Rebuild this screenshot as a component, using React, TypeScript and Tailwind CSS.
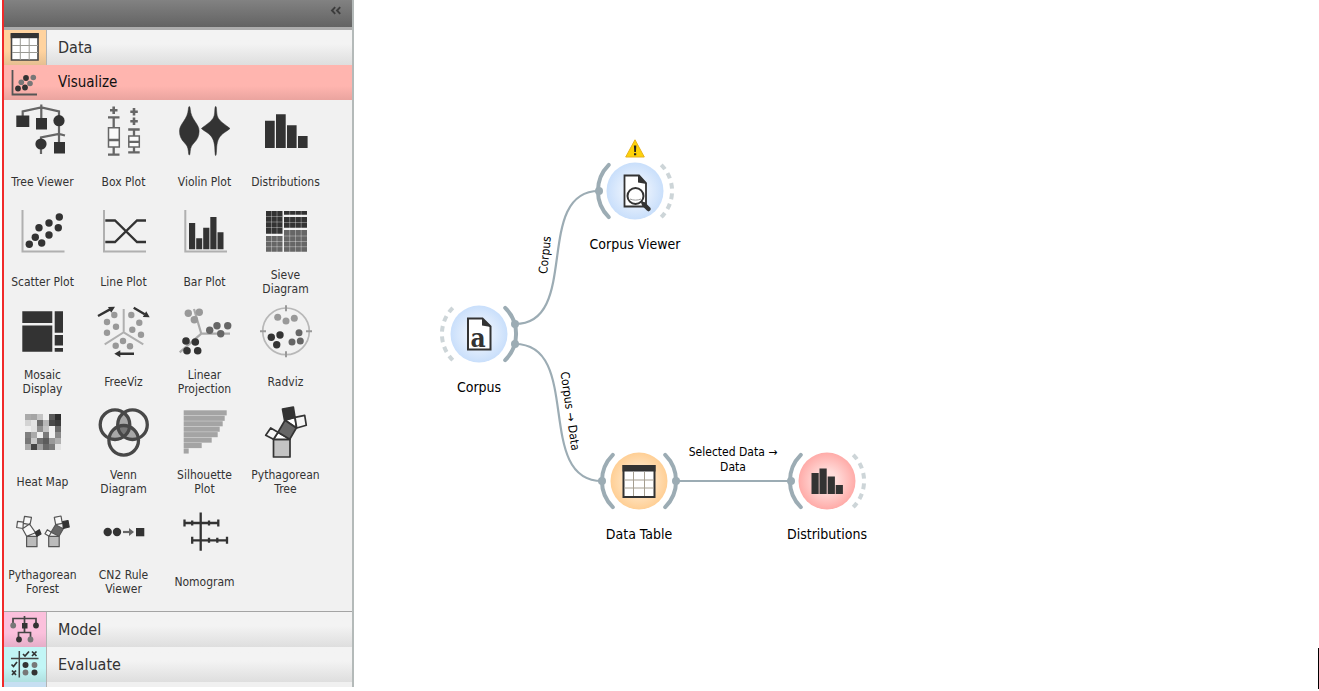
import type { ReactNode } from 'react'

const DARK = '#333'
const MID = '#666'
const LIGHT = '#999'

type Dot = [number, number]

function Dots({ at, r = 3.5, fill = DARK }: { at: Dot[]; r?: number; fill?: string }) {
  return (
    <g fill={fill}>
      {at.map(([x, y]) => (
        <circle key={`${x}-${y}`} cx={x} cy={y} r={r} />
      ))}
    </g>
  )
}

const heat = [
  ['#aaa', '#a4a4a4', '#c4c4c4', '#f0f0f0', '#5a5a5a', '#2e2e2e'],
  ['#d4d4d4', '#e4e4e4', '#6e6e6e', '#b8b8b8', '#4a4a4a', '#3c3c3c'],
  ['#eee', '#e2e2e2', '#909090', '#c4c4c4', '#f0f0f0', '#6a6a6a'],
  ['#808080', '#aaa', '#eee', '#7a7a7a', '#f0f0f0', '#8a8a8a'],
  ['#777', '#c8c8c8', '#707070', '#5c5c5c', '#999', '#b0b0b0'],
  ['#aaa', '#444', '#a0a0a0', '#6a6a6a', '#7c7c7c', '#e4e4e4'],
]

const silhouette = [43, 41, 39, 36, 34, 28, 18, 5]

const icons: Record<string, ReactNode> = {
  tree: (
    <>
      <path d="M29.3 3.5V20M10.7 16v-5.5L29.3 6.5 47 10.5V42M29 53V36.500L47 33l6 1.500" fill="none" stroke={MID} strokeWidth="2.200" />
      <path d="M4.300 14.500h13v11.500h-13zM24 17h11v11.500H24zM42 41h11v11.500H42z" fill={DARK} />
      <Dots at={[[47, 19.700], [29, 43]]} r={5.600} />
    </>
  ),
  box: (
    <g fill="none" stroke={MID} strokeWidth="2.300">
      <path d="M20.700 5.500v7.500M17 9.300h7.500M41 7v7.500M37.300 10.700h7.500M41 16.500V24M37.300 20.200h7.500" strokeWidth="2.600" />
      <path d="M15 16.300h11.500M20.700 16.300v10M20.700 46v8M15 53.700h11.500M35.200 28.500h11.500M41 28.500V35M41 46v5.500M35.200 51.300h11.500" />
      <path d="M15.500 26.800h10.800V46H15.500zM35.800 35h10.500v11H35.800z" fill="#fafafa" strokeWidth="1.500" />
      <path d="M15.500 39h10.800M35.800 40.800h10.500" />
    </g>
  ),
  violin: (
    <path d="M15.300 5.500c.6 0 .8 1 1 3 .4 4.500 2 8 4.800 12 2.300 3.500 4 6 4 9.500 0 5-1.500 8-4.700 11.500-2.500 2.700-3.800 4.500-4.200 9-.2 2.500-.3 3.500-.9 3.500s-.7-1-.9-3.500c-.4-4.500-1.700-6.300-4.200-9C7 38 5.500 35 5.500 30c0-3.500 1.700-6 4-9.500 2.800-4 4.400-7.500 4.800-12 .2-2 .4-3 1-3zM41.700 5.500c.6 0 .8 1 1 5.500.3 5.500 2 7.500 5.500 10.500 3 2.500 5.500 4 7.800 6-2 2-5 3.300-7.500 5.500-3.500 3-5.200 6.500-5.800 13-.3 6-.4 8.500-1 8.500s-.7-2.500-1-8.500c-.6-6.500-2.300-10-5.800-13-2.500-2.200-5.500-3.500-7.500-5.500 2.300-2 4.800-3.500 7.800-6 3.500-3 5.200-5 5.500-10.500.2-4.500.4-5.500 1-5.500z" fill={DARK} stroke={DARK} strokeWidth=".5" />
  ),
  distributions: (
    <path d="M10 19.700h9.700V47H10zM21 13.300h9.700V47H21zM32 24.300h9.600V47H32zM43 35h9.600v12H43z" fill={DARK} />
  ),
  scatter: (
    <>
      <path d="M10.500 9v41.500h42" fill="none" stroke="#b0b0b0" strokeWidth="2" />
      <Dots at={[[17.300, 43.300], [29.700, 42], [23.300, 36.300], [37, 34], [27, 26.700], [46.300, 26.700], [37, 22], [47.300, 16]]} r={3.700} />
    </>
  ),
  line: (
    <>
      <path d="M11 9v41.500h42" fill="none" stroke="#b0b0b0" strokeWidth="2" />
      <path d="M12.300 19.500H22L44 41h9M12.300 41H22L44 19.500h9" fill="none" stroke={DARK} strokeWidth="2.300" />
    </>
  ),
  bar: (
    <>
      <path d="M11.300 9v41.500H53" fill="none" stroke="#b0b0b0" strokeWidth="2" />
      <path d="M15 22h6.200v26.300H15zM22.200 37.300h6v11h-6zM29.200 26.700h6.200v21.600h-6.200zM36.300 16h6.200v32.300h-6.200zM43.500 31.300h6v17h-6z" fill={DARK} />
    </>
  ),
  sieve: (
    <>
      <path d="M11 10h16.500v22.700H11zM29 10h23v3.700H29zM29 16h23v10.700H29z" fill={DARK} />
      <path d="M11 35h16.500v15.700H11zM29 29h23v21.700H29z" fill={MID} />
      <path d="M16.500 10v41M22 10v41M34.700 10v41M40.500 10v41M46.200 10v41M11 15.500h16.500M11 21h16.500M11 26.500h16.500M29 21.500h23M11 40.500h41M11 45.700h41M29 35h23" stroke="#fff" strokeOpacity=".32" strokeWidth="1" />
    </>
  ),
  mosaic: (
    <path d="M10.300 10.300h30V22h-30zM10.300 24.500h30v26.200h-30zM42.700 10.300H51v21.400h-8.300zM42.700 34H51v10.500h-8.300zM42.700 47H51v3.700h-8.300z" fill={DARK} />
  ),
  freeviz: (
    <>
      <path d="M30.700 8v23.300l-19 12M30.700 31.300l19.600 12" fill="none" stroke="#b0b0b0" strokeWidth="2" />
      <Dots fill={LIGHT} r={3.200} at={[[21.300, 14], [14, 21], [23, 25.700], [14, 31.700], [38.300, 14], [46.300, 21.700], [39.300, 28.700], [48, 33.700], [30, 40], [22.700, 44.700], [37, 45.300]]} />
      <path d="M5 15l12-6.600M40.700 6.700l11 6.600M41 52.700H27" stroke={DARK} strokeWidth="2.400" />
      <path d="M22 5.700l-7 .3 3.200 5.800zM56.700 16.300l-3.500-6-3.400 5.700zM21.300 52.700l6-3.500v7z" fill={DARK} />
    </>
  ),
  linear: (
    <>
      <path d="M20 8l7.300 24.700H56M27.300 32.700L5.700 51.300" fill="none" stroke="#aaa" strokeWidth="2.200" />
      <Dots fill={LIGHT} r={3.700} at={[[14.300, 12.300], [25.300, 11.300], [20.300, 18.700]]} />
      <Dots fill={MID} r={3.700} at={[[35.700, 29.300], [43, 24.700], [53.700, 24.700], [46.700, 32.700]]} />
      <Dots at={[[12, 40], [21.300, 41], [13, 49.700], [23.700, 49.700]]} r={3.800} />
    </>
  ),
  radviz: (
    <>
      <circle cx="31" cy="30.300" r="23.300" fill="none" stroke="#b8b8b8" strokeWidth="1.700" />
      <path d="M31 4.300v6M31 50.300v6M5 30.300h6M51 30.300h6" stroke="#999" strokeWidth="2" />
      <Dots fill={LIGHT} at={[[22.700, 16.300], [31, 20], [39.300, 17.300]]} />
      <Dots fill={MID} at={[[44, 31.700], [45.300, 40], [37, 41]]} />
      <Dots at={[[16.300, 36.300], [25, 34], [21.700, 43.700]]} r={3.700} />
    </>
  ),
  heat: (
    <g shapeRendering="crispEdges">
      {heat.map((row, y) =>
        row.map((fill, x) => <rect key={`${x}-${y}`} x={13 + x * 6} y={13 + y * 6} width="6" height="6" fill={fill} />),
      )}
    </g>
  ),
  venn: (
    <>
      <path d="M30.700 11.500c4 3.500 6.300 7.500 6 12.500-4-1.500-8-1.500-12 0-.3-5 2-9 6-12.500zM17 38c0-6 3-10.500 7.700-13.500.7 5 2.800 8.500 6 11.300-4 3-9 4-13.700 2.200zM44.500 38c0-6-3-10.500-7.700-13.500-.7 5-2.800 8.500-6 11.300 4 3 9 4 13.700 2.200z" fill="#a8a8a8" />
      <path d="M24.700 24.500c4-1.500 8-1.500 12 0-.7 5-2.800 8.500-6 11.300-3.200-2.800-5.300-6.300-6-11.300z" fill="#777" />
      <g fill="none" stroke="#484848" strokeWidth="3.300">
        <circle cx="22" cy="23.700" r="14.800" />
        <circle cx="39.500" cy="23.700" r="14.800" />
        <circle cx="30.700" cy="39.300" r="14.800" />
      </g>
    </>
  ),
  silhouette: (
    <g fill="#a4a4a4">
      {silhouette.map((w, i) => (
        <rect key={w} x="9.700" y={9.300 + i * 5.450} width={w} height="5.100" />
      ))}
    </g>
  ),
  pythTree: (
    <g stroke={DARK} strokeWidth="1.700" strokeLinejoin="round">
      <path d="M18.500 38.500H35v17.500H18.500z" fill="#c4c4c4" />
      <path d="M18.500 38.300l4.500-7 12 7zM30 19.300l10-3 1.500 10.700z" fill="#fff" />
      <path d="M30 19.300L41.300 27l-6.600 11.300L23 31.300z" fill={MID} />
      <path d="M27.500 8l10.800-2L40 16.500 29.500 19z" fill={DARK} />
      <path d="M40 16.300l9.700-2 1.600 10L41.700 27zM15.700 27l7.300 4.300-4.500 7-7.800-4z" fill="#f6f6f6" />
    </g>
  ),
  forest: (
    <g stroke="#555" strokeWidth="1.200" strokeLinejoin="round">
      <path d="M14.600 35.300H25v10.400H14.600zM36.700 35.300h10.500v10.400H36.700z" fill="#bbb" />
      <path d="M10.500 27.700L17.500 23l6 8.700-8.900 3.600zM12.500 15.300l7 1-1.500 7.400-6.700-1.400zM5.500 20.300l5.800.9-.3 6.300-6.300-1zM42.300 16.300l6.700-1.300 1.300 7.300-6.600 1.400zM35.300 28.700l4 2.600-2.300 3.900-4-2.500zM14.600 35.300l9-3.600 1.400 3.600z" fill="#f8f8f8" />
      <path d="M43.500 23.700l7.800 4L47 35.300l-8-4z" fill={MID} />
      <path d="M50.700 20.700l5.300-1.200L57.200 26l-5.900 1.500zM23.300 31.200l4-2.500 1.700 4.300-4 2.200z" fill={DARK} stroke={DARK} />
    </g>
  ),
  cn2: (
    <>
      <Dots at={[[14.700, 31], [24, 31]]} r={4.200} />
      <path d="M30 31h7" stroke={MID} strokeWidth="2.200" />
      <path d="M36 27l5 4-5 4z" fill={MID} />
      <path d="M43 27h8.300v8.300H43z" fill={DARK} />
    </>
  ),
  nomogram: (
    <path d="M26.700 11.500v38.300M10.500 22h34M10.500 18.500v7M18.200 19.500v5M35 19.500v5M44.300 18.500v7M18.200 39.300H53M18.200 35.800v7M35 36.800v5M43.300 36.800v5M53 35.800v7" fill="none" stroke={DARK} strokeWidth="2.300" />
  ),
}

const widgets: { icon: string; label: string }[] = [
  { icon: 'tree', label: 'Tree Viewer' },
  { icon: 'box', label: 'Box Plot' },
  { icon: 'violin', label: 'Violin Plot' },
  { icon: 'distributions', label: 'Distributions' },
  { icon: 'scatter', label: 'Scatter Plot' },
  { icon: 'line', label: 'Line Plot' },
  { icon: 'bar', label: 'Bar Plot' },
  { icon: 'sieve', label: 'Sieve Diagram' },
  { icon: 'mosaic', label: 'Mosaic Display' },
  { icon: 'freeviz', label: 'FreeViz' },
  { icon: 'linear', label: 'Linear Projection' },
  { icon: 'radviz', label: 'Radviz' },
  { icon: 'heat', label: 'Heat Map' },
  { icon: 'venn', label: 'Venn Diagram' },
  { icon: 'silhouette', label: 'Silhouette Plot' },
  { icon: 'pythTree', label: 'Pythagorean Tree' },
  { icon: 'forest', label: 'Pythagorean Forest' },
  { icon: 'cn2', label: 'CN2 Rule Viewer' },
  { icon: 'nomogram', label: 'Nomogram' },
]

function TableGlyph() {
  return (
    <>
      <path d="M1.500 1h26.500v26H1.500z" fill="#fff" stroke="#444" strokeWidth="1.600" />
      <path d="M.7 0h28v5.200H.7z" fill={DARK} />
      <path d="M10.300 5v22M19.200 5v22M2 12.500h26M2 19.500h26" stroke="#9a9a94" strokeWidth="1" />
    </>
  )
}

function Category({ label, iconClass, active, children }: { label: string; iconClass: string; active?: boolean; children: ReactNode }) {
  return (
    <button
      className={`flex h-[35px] w-full text-left ${
        active
          ? 'bg-linear-to-b from-[#ffb5af] from-60% to-[#eaa49f] text-[15px] text-[#111]'
          : 'bg-linear-to-b from-[#f3f3f3] from-40% to-[#dedede] text-base text-[#333]'
      }`}
    >
      <span className={`flex h-full w-[43px] items-center pl-1.5 ${iconClass}`}>
        <svg width="29" height="29" viewBox="0 0 29 29" aria-hidden="true">
          {children}
        </svg>
      </span>
      <span className="self-center pl-[11px]">{label}</span>
    </button>
  )
}

const arcs = {
  left: 'M13.800 13.800A37 37 0 0 0 13.800 66.200',
  right: 'M66.200 13.800A37 37 0 0 1 66.200 66.200',
}

function Node({ label, place, tint, left, right, badge, children }: {
  label: string
  place: string
  tint: [string, string]
  left?: 'solid' | 'dashed'
  right?: 'solid' | 'dashed'
  badge?: ReactNode
  children: ReactNode
}) {
  const id = label.replace(' ', '-')
  const arc = (d: string, kind: 'solid' | 'dashed') => (
    <path
      d={d}
      fill="none"
      strokeWidth="4"
      stroke={kind === 'solid' ? '#9cacb4' : '#cdd5d8'}
      strokeLinecap={kind === 'solid' ? 'round' : 'butt'}
      strokeDasharray={kind === 'solid' ? undefined : '5.800 4.700'}
    />
  )
  return (
    <div className={`absolute flex w-[120px] flex-col items-center ${place}`}>
      {badge}
      <svg width="80" height="80" viewBox="0 0 80 80" aria-hidden="true">
        <defs>
          <radialGradient id={id}>
            <stop offset="0" stopColor={tint[0]} />
            <stop offset=".35" stopColor={tint[0]} />
            <stop offset="1" stopColor={tint[1]} />
          </radialGradient>
        </defs>
        <circle cx="40" cy="40" r="28.500" fill={`url(#${id})`} />
        {left && arc(arcs.left, left)}
        {right && arc(arcs.right, right)}
        {children}
      </svg>
      <span className="mt-[3px] text-sm leading-5 whitespace-nowrap text-black">{label}</span>
    </div>
  )
}

export default function App() {
  return (
    <div className="flex min-h-screen bg-white font-['DejaVu_Sans_Condensed','Noto_Sans',sans-serif]">
      <aside className="ml-0.5 w-[352px] shrink-0 self-start border-r-2 border-l-2 border-r-[#b4bab9] border-l-[#f02a2a] bg-[#f1f1f1]">
        <div className="flex h-[30px] items-center justify-end border-b-[3px] border-[#adadad] bg-linear-to-b from-[#828282] to-[#636363] pr-2.5">
          <button aria-label="Collapse" className="mb-1.5">
            <svg width="12" height="9" viewBox="0 0 12 9" fill="none" stroke="#3c3c3c" strokeWidth="1.900">
              <path d="M5.200 1.200L2 4.500l3.200 3.300M10.200 1.200L7 4.500l3.200 3.300" />
            </svg>
          </button>
        </div>
        <Category label="Data" iconClass="border-r border-[#b4b4b4] bg-linear-to-b from-[#ffd39f] from-60% to-[#e6bf91]">
          <TableGlyph />
        </Category>
        <Category label="Visualize" iconClass="" active>
          <path d="M2.500 2v24.500H27" fill="none" stroke="#555" strokeWidth="1.800" />
          <Dots fill="#777" r={2.800} at={[[11.300, 14.300], [23.300, 9.500], [20, 15.500]]} />
          <Dots r={2.900} at={[[8, 20.500], [15, 19.500], [16, 10]]} />
        </Category>
        <div className="-ml-0.5 grid grid-cols-[repeat(auto-fill,81px)] pt-px pb-2.5">
          {widgets.map((w) => (
            <button key={w.label} className="flex h-[100px] flex-col items-center">
              <svg width="61" height="61" viewBox="0 0 61 61" aria-hidden="true">
                {icons[w.icon]}
              </svg>
              <span className="flex h-[39px] items-center px-1 text-center text-xs leading-[14px] text-[#333]">{w.label}</span>
            </button>
          ))}
        </div>
        <div className="border-t border-[#a4a4a4]">
          <Category label="Model" iconClass="border-r border-[#b4b4b4] bg-linear-to-b from-[#fbc0dc] from-60% to-[#e5aec8]">
            <path d="M3 8V3.500h23V8M14.500 1v10M8.500 22v-4.500h12V22M14.500 11v6" fill="none" stroke="#444" strokeWidth="1.700" />
            <Dots fill="#777" r={2.900} at={[[3.200, 10.500], [20.500, 24.500]]} />
            <Dots r={2.900} at={[[26, 10.500], [9, 24.500]]} />
            <path d="M12 8h5.500v5.500H12z" fill={DARK} />
          </Category>
          <Category label="Evaluate" iconClass="border-r border-[#b4b4b4] bg-linear-to-b from-[#c2f6f6] from-60% to-[#b0e0e0]">
            <path d="M9.300 1v26.500M1 8.500h27.500" stroke="#444" strokeWidth="1.500" />
            <path d="M13 4l2 2 4-4.500M1.500 14.500l2 2 3.500-4.500M22 1.500l4.500 4.500M26.500 1.500L22 6M2 20.500l4 4.500M6 20.500L2 25" fill="none" stroke={DARK} strokeWidth="1.700" />
            <Dots fill="#777" r={2.900} at={[[24.500, 15], [15.500, 22.500]]} />
            <Dots r={3} at={[[15.500, 15], [24.500, 22.500]]} />
          </Category>
          <div className="flex h-[5px] bg-[#f0f0f0]">
            <span className="w-[43px] border-r border-[#b4b4b4] bg-[#c6dff2]" />
          </div>
        </div>
      </aside>

      <main className="relative min-h-[691px] flex-1 overflow-hidden">
        <svg className="absolute top-0 left-0" width="560" height="560" viewBox="354 0 560 560" aria-hidden="true">
          <g fill="none" stroke="#9cacb4" strokeWidth="2.200">
            <path d="M515 324C581 324 533 191 599 191" />
            <path d="M515 344C583 344 534 481 602 481" />
            <path d="M676 481H791" />
          </g>
          <Dots fill="#9cacb4" r={4} at={[[515, 324], [515, 344], [599, 191], [602, 481], [676, 481], [791, 481]]} />
        </svg>

        <Node
          label="Corpus Viewer"
          place="left-[221px] top-[151px]"
          tint={['#eaf2fd', '#c9dffb']}
          left="solid"
          right="dashed"
          badge={
            <svg className="absolute -top-3 left-[50px]" width="20" height="19" viewBox="0 0 20 19" aria-hidden="true">
              <path d="M10 .8L19.300 18H.7z" fill="#fdd20a" stroke="#e8b21c" strokeWidth="1" strokeLinejoin="round" />
              <path d="M8.900 6.500h2.400l-.4 6.500H9.300zM9 14.200h2.200v2H9z" fill="#222" />
            </svg>
          }
        >
          <path d="M29.500 24.500h14.500l7 7.500v23.500H29.500z" fill="#fff" stroke={DARK} strokeWidth="1.800" />
          <path d="M43 24l8.500 9-8.500-1.500z" fill={DARK} />
          <circle cx="40.500" cy="45" r="8" fill="#fff" stroke={DARK} strokeWidth="2" />
          <path d="M35 48c3.500 1.500 7.500 1.500 11 0" stroke="#999" fill="none" />
          <path d="M46.500 51l3 2.500" stroke={DARK} strokeWidth="2.500" />
          <path d="M49 53.500l4.500 4.500" stroke={DARK} strokeWidth="4.500" strokeLinecap="round" />
        </Node>

        <Node label="Corpus" place="left-[65px] top-[294px]" tint={['#eaf2fd', '#c9dffb']} left="dashed" right="solid">
          <path d="M29 24.500h14.500l8 8V55.500H29z" fill="#fff" stroke={DARK} strokeWidth="2" />
          <path d="M43 24l9 9-9-1.500z" fill={DARK} />
          <text x="39" y="53" textAnchor="middle" className="font-['DejaVu_Serif_Condensed','DejaVu_Serif',serif] text-[26px] font-bold" fill={DARK}>a</text>
        </Node>

        <Node label="Data Table" place="left-[225px] top-[441px]" tint={['#ffe8cb', '#ffcf95']} left="solid" right="solid">
          <path d="M24.500 25h31v31h-31z" fill="#fff" stroke={DARK} strokeWidth="2" />
          <path d="M23.500 24h33v6.500h-33z" fill={DARK} />
          <path d="M34.500 31v24M45.500 31v24M25 39h30M25 47h30" stroke="#a59e90" strokeWidth="1" />
        </Node>

        <Node label="Distributions" place="left-[413px] top-[441px]" tint={['#ffdcda', '#ffaba8']} left="solid" right="dashed">
          <path d="M24.500 32h7.200v21h-7.200zM32.500 27.500h7.200V53h-7.200zM40.700 35.500h7.200V53h-7.200zM48.700 44h7.200v9h-7.200z" fill={DARK} />
        </Node>

        <span className="absolute top-[248px] left-[161px] w-[60px] -rotate-84 text-center text-xs leading-[14px] text-black">Corpus</span>
        <span className="absolute top-[404px] left-[166px] w-[100px] rotate-82 text-center text-xs leading-[14px] text-black">Corpus → Data</span>
        <span className="absolute top-[445px] left-[329px] w-[100px] text-center text-xs leading-[15px] text-black">
          Selected Data → Data
        </span>
        <span className="absolute right-0 bottom-0.5 h-[41px] w-px bg-black" />
      </main>
    </div>
  )
}
